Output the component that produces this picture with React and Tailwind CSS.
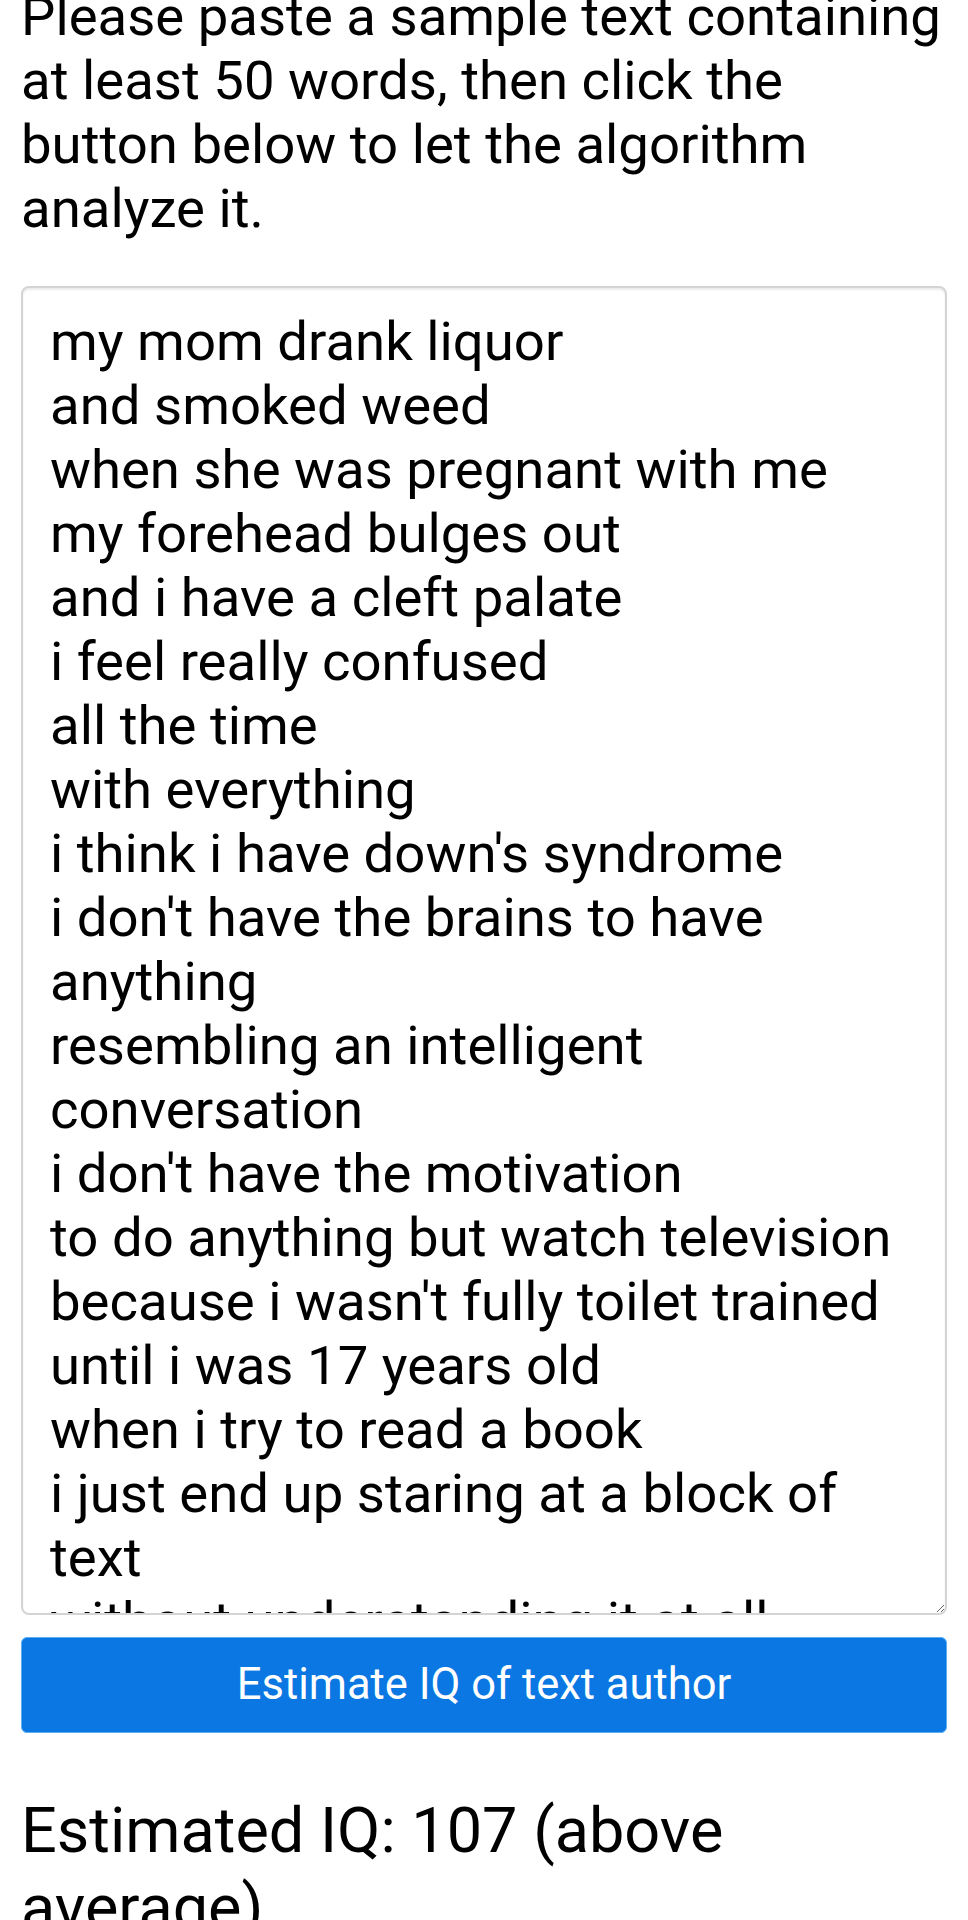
import { useState } from "react";

const SAMPLE = [
  "my mom drank liquor",
  "and smoked weed",
  "when she was pregnant with me",
  "my forehead bulges out",
  "and i have a cleft palate",
  "i feel really confused",
  "all the time",
  "with everything",
  "i think i have down's syndrome",
  "i don't have the brains to have anything",
  "resembling an intelligent conversation",
  "i don't have the motivation",
  "to do anything but watch television",
  "because i wasn't fully toilet trained",
  "until i was 17 years old",
  "when i try to read a book",
  "i just end up staring at a block of text",
  "without understanding it at all",
  "so i just sit here",
].join("\n");

export default function App() {
  const [text, setText] = useState(SAMPLE);

  return (
    <div className="min-h-screen bg-white px-[21px] text-black font-['Roboto',sans-serif] overflow-hidden">
      <p className="-mt-[16px] text-[54.5px] leading-[64px]">
        Please paste a sample text containing at least 50 words, then click the button below to let the algorithm analyze it.
      </p>

      <textarea
        value={text}
        onChange={(e) => setText(e.target.value)}
        className="mt-[46px] block w-full h-[1329px] rounded-[8px] border-2 border-[#d4d4d4] bg-white pl-[27px] pr-[22px] pt-[21px] pb-[21px] text-[54.5px] leading-[64px] text-black shadow-[inset_0_2px_2px_rgba(0,0,0,0.08)] outline-none [scrollbar-width:none] font-['Roboto',sans-serif]"
      />

      <button
        type="button"
        className="mt-[22px] block w-full h-[96px] rounded-[6px] bg-[#0a77e3] border border-[#5aaef0] text-white text-[43.5px] font-['Roboto',sans-serif]"
      >
        Estimate IQ of text author
      </button>

      <h2 className="mt-[59px] text-[63px] leading-[77px] font-normal">
        Estimated IQ: 107 (above average)
      </h2>
    </div>
  );
}
